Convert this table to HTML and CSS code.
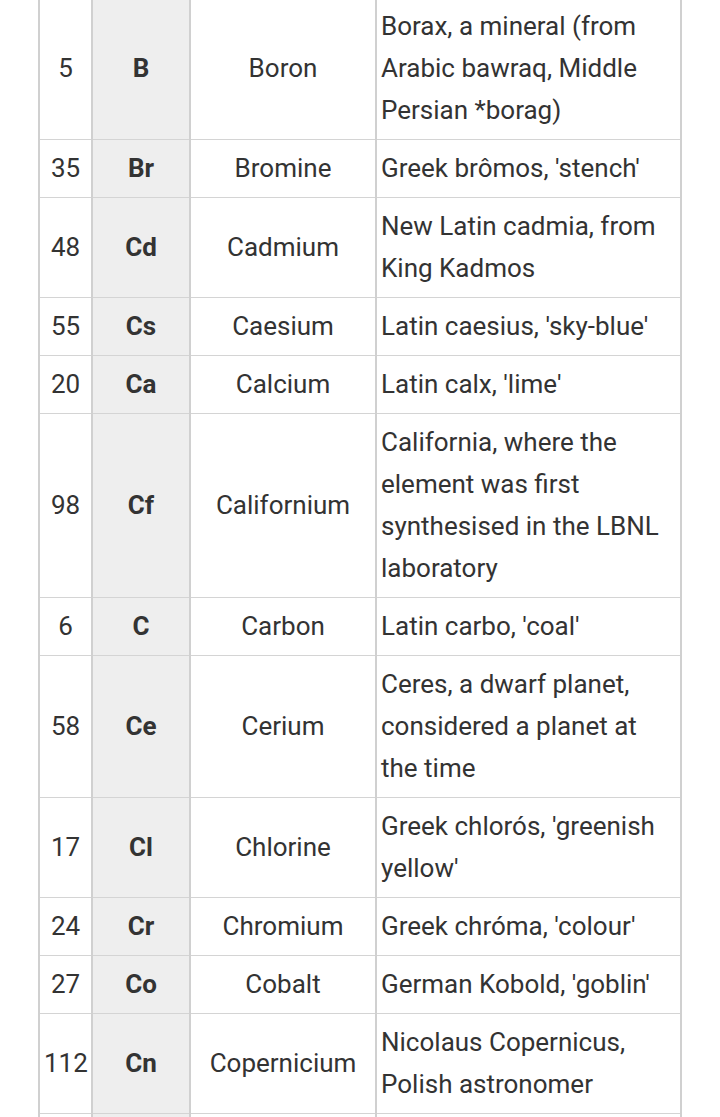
FILE: index.html
```html
<!DOCTYPE html>
<html lang="en">
<head>
<meta charset="utf-8">
<title>Elements</title>
<link rel="stylesheet" href="styles.css">
</head>
<body>
<table class="elements">
  <colgroup>
    <col class="c-num">
    <col class="c-sym">
    <col class="c-name">
    <col class="c-orig">
  </colgroup>
  <tbody>
    <tr><td class="num">5</td><td class="sym">B</td><td class="name">Boron</td><td class="orig">Borax, a mineral (from Arabic bawraq, Middle Persian *borag)</td></tr>
    <tr><td class="num">35</td><td class="sym">Br</td><td class="name">Bromine</td><td class="orig">Greek brômos, 'stench'</td></tr>
    <tr><td class="num">48</td><td class="sym">Cd</td><td class="name">Cadmium</td><td class="orig">New Latin cadmia, from King Kadmos</td></tr>
    <tr><td class="num">55</td><td class="sym">Cs</td><td class="name">Caesium</td><td class="orig">Latin caesius, 'sky-blue'</td></tr>
    <tr><td class="num">20</td><td class="sym">Ca</td><td class="name">Calcium</td><td class="orig">Latin calx, 'lime'</td></tr>
    <tr><td class="num">98</td><td class="sym">Cf</td><td class="name">Californium</td><td class="orig">California, where the element was first synthesised in the LBNL laboratory</td></tr>
    <tr><td class="num">6</td><td class="sym">C</td><td class="name">Carbon</td><td class="orig">Latin carbo, 'coal'</td></tr>
    <tr><td class="num">58</td><td class="sym">Ce</td><td class="name">Cerium</td><td class="orig">Ceres, a dwarf planet, considered a planet at the time</td></tr>
    <tr><td class="num">17</td><td class="sym">Cl</td><td class="name">Chlorine</td><td class="orig">Greek chlorós, 'greenish yellow'</td></tr>
    <tr><td class="num">24</td><td class="sym">Cr</td><td class="name">Chromium</td><td class="orig">Greek chróma, 'colour'</td></tr>
    <tr><td class="num">27</td><td class="sym">Co</td><td class="name">Cobalt</td><td class="orig">German Kobold, 'goblin'</td></tr>
    <tr><td class="num">112</td><td class="sym">Cn</td><td class="name">Copernicium</td><td class="orig">Nicolaus Copernicus, Polish astronomer</td></tr>
    <tr class="next"><td class="num"></td><td class="sym"></td><td class="name"></td><td class="orig"></td></tr>
  </tbody>
</table>
</body>
</html>
```

FILE: styles.css
```css
html, body {
  margin: 0;
  padding: 0;
  background: #ffffff;
}

body {
  font-family: Roboto, "Liberation Sans", sans-serif;
  font-size: 26px;
  line-height: 42px;
  color: #333333;
  overflow: hidden;
}

.elements {
  margin: -3px 0 0 38px;
  width: 644px;
  table-layout: fixed;
  border-collapse: collapse;
}

.c-num { width: 53px; }
.c-sym { width: 98px; }
.c-name { width: 186px; }
.c-orig { width: 305px; }

.elements td {
  padding: 7px 4px 8px;
  vertical-align: middle;
  border-top: 1px solid #d4d4d4;
  border-bottom: 1px solid #d4d4d4;
  border-left: 2px solid #d0d0d0;
  border-right: 2px solid #d0d0d0;
}

.next td {
  height: 42px;
}

.num {
  text-align: center;
  padding-left: 1px;
  padding-right: 1px;
}

.sym {
  text-align: center;
  font-weight: bold;
  background: #eeeeee;
}

.name {
  text-align: center;
}

.orig {
  text-align: left;
}
```
